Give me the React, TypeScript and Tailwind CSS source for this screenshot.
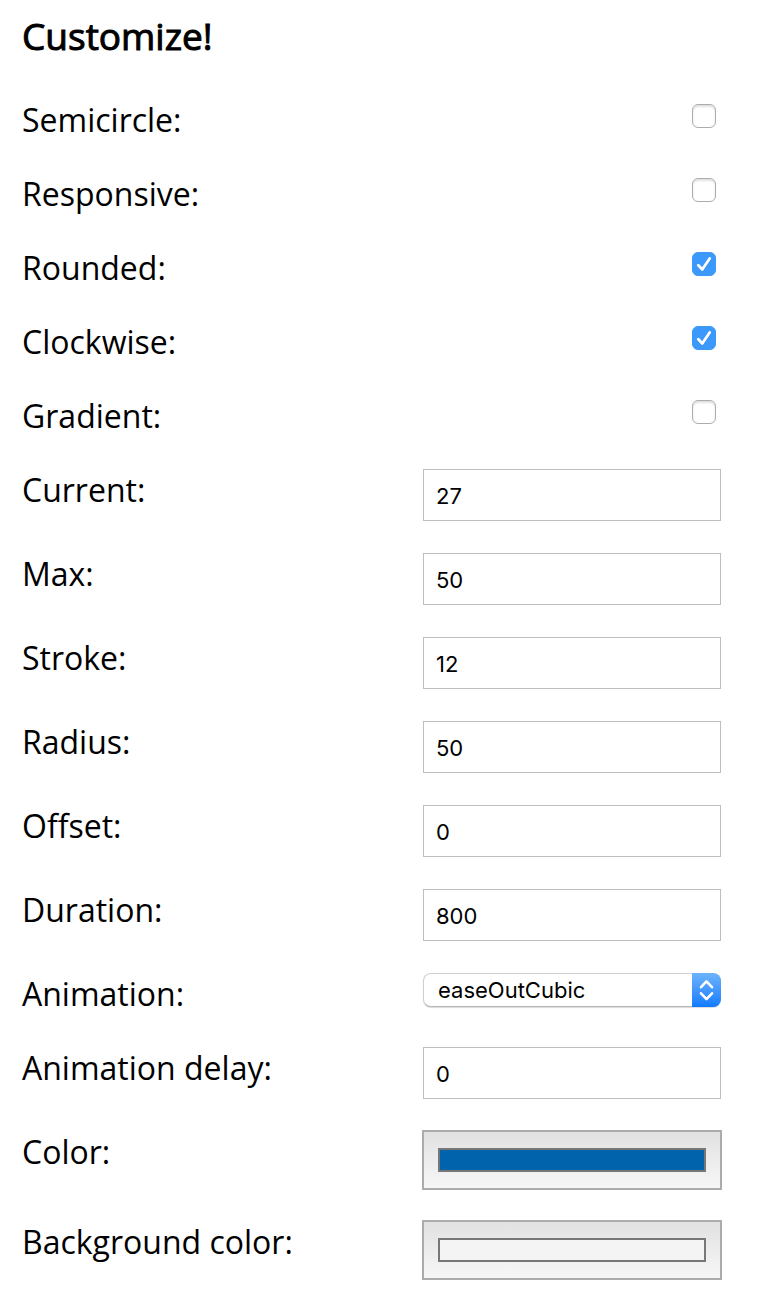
import { useState } from "react";
import type { ReactNode } from "react";

function Row({ id, label, children }: { id: string; label: string; children: ReactNode }) {
  return (
    <div className="flex items-start justify-between gap-4">
      <label htmlFor={id} className="text-[32px] leading-[42px]">
        {label}
      </label>
      <div className="flex w-[298px] shrink-0 justify-end">{children}</div>
    </div>
  );
}

function CheckRow({ id, label, initial = false }: { id: string; label: string; initial?: boolean }) {
  const [checked, setChecked] = useState(initial);
  return (
    <Row id={id} label={label}>
      <span className="relative mt-[5px] mr-[5px] block size-6">
        <input
          id={id}
          type="checkbox"
          checked={checked}
          onChange={(e) => setChecked(e.target.checked)}
          className="block size-6 appearance-none rounded-[6px] border border-[#acacac] bg-white shadow-[inset_0_2px_2px_rgba(0,0,0,0.12)] checked:border-[#3b99fc] checked:bg-[#3b99fc] checked:shadow-none"
        />
        {checked && (
          <svg viewBox="0 0 24 24" className="pointer-events-none absolute inset-0 size-6" fill="none" aria-hidden="true">
            <path d="M6.3 14.2 10.3 18.3 17.7 7.5" stroke="#2678cc" strokeOpacity="0.5" strokeWidth="2.6" strokeLinecap="round" strokeLinejoin="round" />
            <path d="M6.3 13.2 10.3 17.5 17.7 6.5" stroke="#fff" strokeWidth="2.8" strokeLinecap="round" strokeLinejoin="round" />
          </svg>
        )}
      </span>
    </Row>
  );
}

function TextRow({ id, label, value }: { id: string; label: string; value: string }) {
  return (
    <Row id={id} label={label}>
      <input
        id={id}
        type="text"
        inputMode="numeric"
        defaultValue={value}
        className="h-[52px] w-full border border-[#bfbfbf] bg-white px-3 pt-[2px] font-['Inter',sans-serif] text-[22px]"
      />
    </Row>
  );
}

function ColorRow({ id, label, value }: { id: string; label: string; value: string }) {
  return (
    <Row id={id} label={label}>
      <input
        id={id}
        type="color"
        defaultValue={value}
        className="-m-px h-[60px] w-[300px] shrink-0 appearance-none border-2 border-[#acacac] bg-linear-to-b from-[#e1e1e1] to-[#f7f7f7] px-[14px] py-4 [&::-webkit-color-swatch-wrapper]:p-0 [&::-webkit-color-swatch]:rounded-none [&::-webkit-color-swatch]:border-2 [&::-webkit-color-swatch]:border-[#777777]"
      />
    </Row>
  );
}

export default function App() {
  return (
    <main className="bg-white pt-[15px] pr-[37px] pb-5 pl-[22px] font-['Open_Sans',sans-serif] text-black">
      <h3 className="mb-[42px] text-[37px] leading-[42px] font-normal [-webkit-text-stroke:1px_black]">Customize!</h3>
      <form className="flex flex-col gap-8">
        <CheckRow id="semicircle" label="Semicircle:" />
        <CheckRow id="responsive" label="Responsive:" />
        <CheckRow id="rounded" label="Rounded:" initial />
        <CheckRow id="clockwise" label="Clockwise:" initial />
        <CheckRow id="gradient" label="Gradient:" />
        <TextRow id="current" label="Current:" value="27" />
        <TextRow id="max" label="Max:" value="50" />
        <TextRow id="stroke" label="Stroke:" value="12" />
        <TextRow id="radius" label="Radius:" value="50" />
        <TextRow id="offset" label="Offset:" value="0" />
        <TextRow id="duration" label="Duration:" value="800" />
        <Row id="animation" label="Animation:">
          <span className="relative block w-full">
            <select
              id="animation"
              defaultValue="easeOutCubic"
              className="block h-[34px] w-full appearance-none rounded-[8px] border border-[#d0d0d0] border-b-[#b8b8b8] bg-white pr-8 pl-[14px] font-['Inter',sans-serif] text-[22px] leading-8 shadow-[0_1px_1px_rgba(0,0,0,0.15)]"
            >
              <option>linearEase</option>
              <option>easeInCubic</option>
              <option>easeOutCubic</option>
              <option>easeInOutCubic</option>
            </select>
            <span className="pointer-events-none absolute inset-y-0 right-0 flex w-[29px] items-center justify-center rounded-r-[8px] bg-linear-to-b from-[#6cb3fa] to-[#0a7aff]">
              <svg viewBox="0 0 16 22" className="h-[22px] w-4" fill="none" stroke="#fff" strokeWidth="2.6" strokeLinecap="round" strokeLinejoin="round" aria-hidden="true">
                <path d="M2 8.2 7.5 2.4 13 8.2M2 14.3 7.5 20.1 13 14.3" />
              </svg>
            </span>
          </span>
        </Row>
        <TextRow id="delay" label="Animation delay:" value="0" />
        <ColorRow id="color" label="Color:" value="#0063ab" />
        <ColorRow id="background" label="Background color:" value="#f4f4f4" />
      </form>
    </main>
  );
}
